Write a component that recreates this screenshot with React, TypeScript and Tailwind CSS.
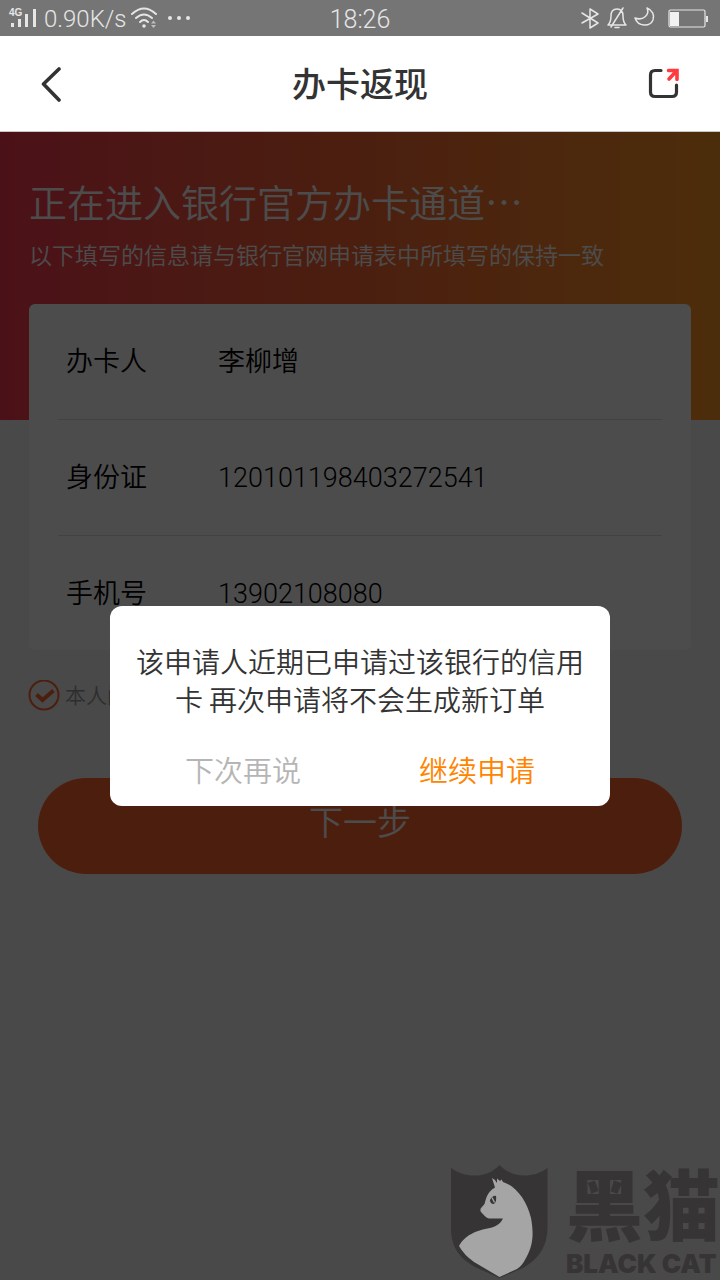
import React, { useState } from 'react';

const applicant = [
    { id: 'name', label: '办卡人', value: '李柳增' },
    { id: 'idcard', label: '身份证', value: '120101198403272541' },
    { id: 'phone', label: '手机号', value: '13902108080' },
];

const StatusBar = () => (
    <div className="relative flex h-9 items-center justify-between bg-[#757575] pl-2 pr-3 text-[#e6e6e6] font-['Roboto',sans-serif]">
        <div className="flex items-center">
            <svg width="30" height="22" viewBox="0 0 30 22" fill="currentColor">
                <text x="1" y="9" fontSize="10" fontWeight="700" fontFamily="Liberation Sans, sans-serif">4G</text>
                <rect x="3" y="16" width="3" height="4" />
                <rect x="10" y="12" width="3" height="8" />
                <rect x="17" y="7" width="3" height="13" />
                <rect x="25" y="2" width="3" height="18" />
            </svg>
            <span className="ml-1.5 pt-0.5 text-2xl leading-8">0.90K/s</span>
            <svg className="ml-1" width="28" height="24" viewBox="0 0 28 24" fill="none" stroke="currentColor" strokeWidth="2" strokeLinecap="round">
                <path d="M1 8 Q13 -3 25 8" />
                <path d="M5 12 Q13 5 21 12" />
                <path d="M9 16 Q13 12 17 16" />
                <circle cx="13" cy="20" r="1.8" fill="currentColor" stroke="none" />
                <path d="M20 17.5l2.5-3 2.5 3zM20 19l2.5 3 2.5-3z" fill="#bdbdbd" stroke="none" />
            </svg>
            <svg className="ml-2" width="24" height="6" viewBox="0 0 24 6" fill="currentColor">
                <circle cx="3" cy="3" r="2" />
                <circle cx="12" cy="3" r="2" />
                <circle cx="21" cy="3" r="2" />
            </svg>
        </div>
        <span className="absolute inset-x-0 pt-1 text-center text-[25px] leading-9">18:26</span>
        <div className="flex items-center">
            <svg width="76" height="24" viewBox="0 0 76 24" fill="none" stroke="currentColor" strokeWidth="1.5" strokeLinejoin="round" strokeLinecap="round">
                <path d="M2 7l16 10-8 5V3l8 5L2 17" />
                <path d="M28 19h18c-2-2-3-4-3-9s-2-7-6-7-6 3-6 7-1 7-3 9zM35 21.500h4M43 2L31 21" />
                <path d="M67 2c5 2 8 7 6 12-3 7-15 7-18-2 8 3 15-3 12-10z" />
            </svg>
            <svg className="ml-3" width="40" height="20" viewBox="0 0 40 20">
                <rect x="1" y="2" width="36" height="17" rx="1.5" fill="none" stroke="#e6e6e6" strokeWidth="1.2" />
                <rect x="2" y="4" width="9" height="14" fill="#f2f2f2" />
                <rect x="38" y="8" width="2" height="6" fill="#e6e6e6" />
            </svg>
        </div>
    </div>
);

const Header = () => (
    <header className="grid h-24 grid-cols-3 items-center border-b border-[#c8c8c8] bg-white px-10">
        <button type="button" aria-label="返回" className="justify-self-start">
            <svg width="22" height="36" viewBox="0 0 22 36" fill="none" stroke="#333" strokeWidth="3.6" strokeLinecap="round" strokeLinejoin="round">
                <path d="M19 3L3.500 18 19 34" />
            </svg>
        </button>
        <h1 className="pb-0.5 text-center text-[34px] font-medium leading-none text-[#333]">办卡返现</h1>
        <button type="button" aria-label="分享" className="justify-self-end">
            <svg width="32" height="32" viewBox="0 0 32 32" fill="none" strokeWidth="3.2" strokeLinecap="round" strokeLinejoin="round">
                <path d="M13 2.500H7Q2.500 2.500 2.500 7V24Q2.500 28.500 7 28.500H24Q28.500 28.500 28.500 24V17" stroke="#333" />
                <path d="M20.500 2.500h8.500v9M28 3.500L21 11" stroke="#ff3b40" strokeWidth="3.6" strokeLinejoin="miter" />
            </svg>
        </button>
    </header>
);

const Watermark = () => (
    <div className="absolute bottom-0 right-0 flex items-end text-[#373435]">
        <svg width="98" height="116" viewBox="0 0 98 116" fill="currentColor">
            <path d="M1 4C16 15 38 14 49.500 1 61 14 83 15 97.500 4V64C97 84 88 95 73 104L49.500 114 25 103C10 94 1 84 1 64Z" />
            <path d="M42 14Q46 16 47 19L47 14.500 50 17 51.500 15.500 53 18C66 22 77 37 81 54C84 70 83 82 76 94Q72 102 67 105L49.500 113 24 98Q14 91 9 82C16 69 30 66 42 63.500Q50 61 53 54.500H39C36 54 34 51 31 48C29 45 32 43 34.500 40C36 36 36 29 45 23.500Z" fill="#a5a5a5" />
            <path d="M40 36q3-5 6-4 1 5-2 8-4 0-4-4z" />
            <path d="M42 33.500l2.500 5" stroke="#a5a5a5" strokeWidth="1.4" />
        </svg>
        <div className="ml-4.5 flex flex-col gap-1">
            <span className="text-[77px] font-black leading-[84px]">黑猫</span>
            <span className="text-[26px] font-black leading-8 font-['Inter',sans-serif]">BLACK CAT</span>
        </div>
    </div>
);

const App = () => {
    const [agreed, setAgreed] = useState(true);
    const [open, setOpen] = useState(true);

    return (
        <div className="flex min-h-screen flex-col bg-[#f3f3f3] font-['Noto_Sans_CJK_SC',sans-serif] font-[350]">
            <StatusBar />
            <Header />
            <main className="relative flex-1">
                <div className="h-72 bg-linear-to-r from-[#fa3950] via-[#fc6834] to-[#fd9825] px-[29px] pt-11 text-white">
                    <h2 className="text-[38px] leading-[50px]">正在进入银行官方办卡通道…</h2>
                    <p className="mt-3 text-[23px] leading-8">以下填写的信息请与银行官网申请表中所填写的保持一致</p>
                </div>

                <dl className="relative mx-[29px] -mt-[116px] rounded-md bg-white px-[29px] text-black">
                    {applicant.map((item) => (
                        <div key={item.id} className="flex h-[116px] items-baseline border-b border-[#dcdcdc] px-2 pt-9 text-[27px] leading-10 last:h-[114px] last:border-b-0">
                            <dt className="w-[152px]">{item.label}</dt>
                            <dd className="font-['Roboto','Noto_Sans_CJK_SC',sans-serif]">{item.value}</dd>
                        </div>
                    ))}
                </dl>

                <label className="mt-7 flex items-center px-7 text-[21px] leading-8 text-[#999]">
                    <input type="checkbox" className="peer sr-only" checked={agreed} onChange={() => setAgreed(!agreed)} />
                    <svg className="mr-1 opacity-60 peer-checked:opacity-100" width="33" height="32" viewBox="0 0 33 32" fill="none" stroke="#ff672f">
                        <circle cx="16" cy="15" r="14.500" strokeWidth="2" />
                        <path d="M8.500 14.500l6 5.500 11-9.500" strokeWidth="4" />
                    </svg>
                    <span className="pb-1">本人阅</span>
                </label>

                <div className="mt-16 px-[38px]">
                    <button type="button" className="h-24 w-full rounded-full bg-[#ff672f] pb-3 text-[34px] text-white">下一步</button>
                </div>

                {open && (
                    <div className="absolute inset-0 flex items-center justify-center bg-black/70">
                        <div role="dialog" aria-modal="true" className="w-[500px] rounded-xl bg-white pb-3.5 pt-9">
                            <p className="px-6 text-center text-[28px] leading-[38px] text-[#333]">
                                该申请人近期已申请过该银行的信用卡 再次申请将不会生成新订单
                            </p>
                            <div className="mt-7 flex justify-around px-4 text-[29px] leading-[46px]">
                                <button type="button" className="text-[#b5b5b5]" onClick={() => setOpen(false)}>下次再说</button>
                                <button type="button" className="text-[#ff8400]">继续申请</button>
                            </div>
                        </div>
                    </div>
                )}
                <Watermark />
            </main>
        </div>
    );
};

export default App;
